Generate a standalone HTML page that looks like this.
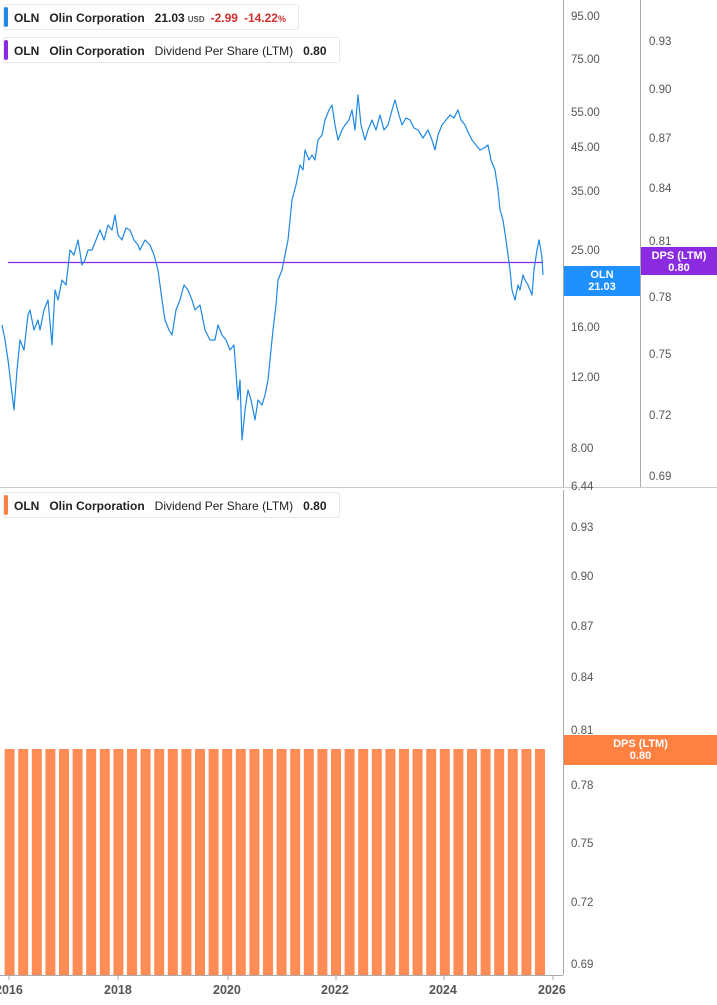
<!DOCTYPE html><html><head><style>
body{margin:0;width:717px;height:1005px;background:#fff;font-family:"Liberation Sans",sans-serif;position:relative;overflow:hidden}
.lg{position:absolute;left:3px;height:26px;border:1px solid #e6e6e6;border-radius:3px;background:#fff;font-size:12px;font-weight:bold;color:#222;line-height:26px;padding-left:10px;white-space:nowrap;box-sizing:border-box}
.lg:before{content:"";position:absolute;left:0;top:2px;bottom:2px;width:4px;border-radius:2px;background:var(--c)}
.lg span{margin-right:10px}
.n{font-weight:normal}
.ax{position:absolute;font-size:11.5px;color:#555}
.tag{position:absolute;color:#fff;font-weight:bold;font-size:11px;text-align:center;line-height:12px}
</style></head><body>
<svg width="717" height="1005" style="position:absolute;left:0;top:0">
<line x1="563.5" y1="0" x2="563.5" y2="487" stroke="#aaa"/>
<line x1="640.5" y1="0" x2="640.5" y2="487" stroke="#aaa"/>
<line x1="0" y1="487.5" x2="717" y2="487.5" stroke="#ccc"/>
<line x1="563.5" y1="490" x2="563.5" y2="975" stroke="#aaa"/>
<line x1="0" y1="975.5" x2="563" y2="975.5" stroke="#aaa"/>
<g stroke="#aaa"><line x1="9" y1="975" x2="9" y2="980"/><line x1="118" y1="975" x2="118" y2="980"/><line x1="228" y1="975" x2="228" y2="980"/><line x1="336" y1="975" x2="336" y2="980"/><line x1="444" y1="975" x2="444" y2="980"/><line x1="553" y1="975" x2="553" y2="980"/></g>
<line x1="8" y1="262.5" x2="543" y2="262.5" stroke="#8a2be2" stroke-width="1.2"/>
<polyline fill="none" stroke="#1e88e5" stroke-width="1.2" stroke-linejoin="round" points="2,325 5,340 8,360 11,385 14,410 17,370 20,340 24,350 28,315 30,310 34,330 38,320 40,330 44,310 48,300 52,345 55,290 58,300 62,280 66,285 70,250 74,255 78,240 82,265 85,260 88,250 92,250 96,240 100,230 104,240 108,225 112,230 115,215 118,235 122,240 126,228 130,230 134,240 138,245 140,250 145,240 150,245 154,255 158,270 162,300 165,320 169,330 172,335 176,310 180,300 184,285 188,290 192,300 195,310 200,305 205,330 210,340 215,340 218,325 222,335 226,340 230,350 234,345 238,400 240,380 242,440 245,410 248,390 251,400 255,420 258,400 262,405 265,395 268,380 271,350 273,330 276,305 278,280 282,270 285,255 288,240 292,200 296,185 300,165 303,170 305,150 309,160 312,155 315,160 318,140 322,135 325,120 329,110 332,105 335,125 338,140 342,130 345,125 349,120 352,110 355,130 358,95 361,125 365,140 368,130 372,120 376,130 380,115 384,130 388,125 392,110 395,100 399,115 402,125 406,118 410,120 414,128 418,130 423,138 428,130 432,140 435,150 438,135 442,125 446,120 450,115 454,118 458,110 461,120 465,125 468,132 472,140 476,145 480,150 484,148 488,145 491,160 495,170 498,190 500,210 503,220 506,240 508,255 510,270 512,290 515,300 518,285 520,290 523,275 525,280 528,285 532,295 534,270 537,250 539,240 540,245 542,258 543,275"/>
</svg>
<svg width="717" height="1005" style="position:absolute;left:0;top:0" id="b"></svg>
<div class="lg" style="--c:#1e88e5;top:4px;width:296px"><span>OLN</span><span>Olin Corporation</span><span style="margin-right:3px">21.03</span><span style="font-size:8px;color:#555;margin-right:6px">USD</span><span style="color:#d32f2f;margin-right:6px">-2.99</span><span style="color:#d32f2f">-14.22<span style="font-size:9px;margin:0">%</span></span></div>
<div class="lg" style="--c:#8a2be2;top:37px;width:337px"><span>OLN</span><span>Olin Corporation</span><span class="n">Dividend Per Share (LTM)</span><span>0.80</span></div>
<div class="lg" style="--c:#ff7f40;top:492px;width:337px"><span>OLN</span><span>Olin Corporation</span><span class="n">Dividend Per Share (LTM)</span><span>0.80</span></div>
<div class="ax" style="left:571px;top:11px">95.00</div>
<div class="ax" style="left:571px;top:54px">75.00</div>
<div class="ax" style="left:571px;top:107px">55.00</div>
<div class="ax" style="left:571px;top:142px">45.00</div>
<div class="ax" style="left:571px;top:186px">35.00</div>
<div class="ax" style="left:571px;top:245px">25.00</div>
<div class="ax" style="left:571px;top:322px">16.00</div>
<div class="ax" style="left:571px;top:372px">12.00</div>
<div class="ax" style="left:571px;top:443px">8.00</div>
<div class="ax" style="left:571px;top:481px">6.44</div>
<div class="ax" style="left:649px;top:36px">0.93</div>
<div class="ax" style="left:649px;top:84px">0.90</div>
<div class="ax" style="left:649px;top:133px">0.87</div>
<div class="ax" style="left:649px;top:183px">0.84</div>
<div class="ax" style="left:649px;top:236px">0.81</div>
<div class="ax" style="left:649px;top:292px">0.78</div>
<div class="ax" style="left:649px;top:349px">0.75</div>
<div class="ax" style="left:649px;top:410px">0.72</div>
<div class="ax" style="left:649px;top:471px">0.69</div>
<div class="ax" style="left:571px;top:522px">0.93</div>
<div class="ax" style="left:571px;top:571px">0.90</div>
<div class="ax" style="left:571px;top:621px">0.87</div>
<div class="ax" style="left:571px;top:672px">0.84</div>
<div class="ax" style="left:571px;top:725px">0.81</div>
<div class="ax" style="left:571px;top:780px">0.78</div>
<div class="ax" style="left:571px;top:838px">0.75</div>
<div class="ax" style="left:571px;top:897px">0.72</div>
<div class="ax" style="left:571px;top:959px">0.69</div>
<div class="ax" style="left:-5px;top:983px;font-weight:bold;font-size:12.5px">2016</div>
<div class="ax" style="left:104px;top:983px;font-weight:bold;font-size:12.5px">2018</div>
<div class="ax" style="left:213px;top:983px;font-weight:bold;font-size:12.5px">2020</div>
<div class="ax" style="left:321px;top:983px;font-weight:bold;font-size:12.5px">2022</div>
<div class="ax" style="left:429px;top:983px;font-weight:bold;font-size:12.5px">2024</div>
<div class="ax" style="left:538px;top:983px;font-weight:bold;font-size:12.5px">2026</div>
<div class="tag" style="left:564px;top:266px;width:76px;height:30px;background:#1e90ff;padding-top:3px;box-sizing:border-box">OLN<br>21.03</div>
<div class="tag" style="left:641px;top:247px;width:76px;height:28px;background:#8a2be2;padding-top:3px;box-sizing:border-box">DPS (LTM)<br>0.80</div>
<div class="tag" style="left:564px;top:735px;width:153px;height:30px;background:#ff8040;padding-top:3px;box-sizing:border-box">DPS (LTM)<br>0.80</div>
<script>
var s='';for(var i=0;i<40;i++){var x=4.6+i*13.6;s+='<rect x="'+x.toFixed(1)+'" y="749" width="10" height="226" fill="#ff8c55"/>';}
document.getElementById('b').innerHTML=s;
</script>
</body></html>
